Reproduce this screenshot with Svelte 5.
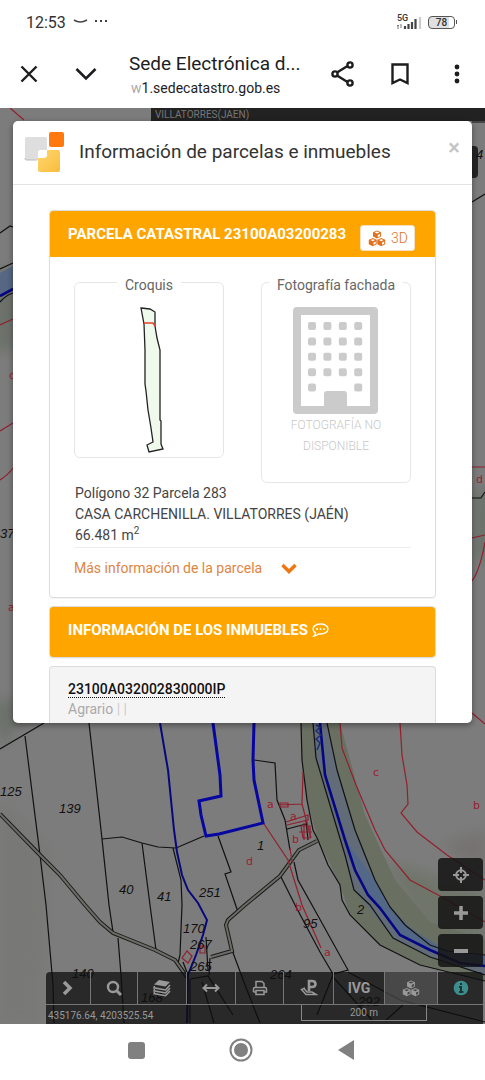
<script lang="ts">
  const windows = [0, 1, 2, 3].flatMap((row) => [0, 1, 2, 3].map((col) => [col, row]));
  windows.push([0, 4], [3, 4]);

  const parcels = [
    "M0 749 44 723M25 736 40 855 46 905 53 985 54 1023",
    "M89 723 96 785 102 839 109 905 113 932M118 938 121 975 124 1023",
    "M102 839 122 837 142 843 158 847 176 848 204 836",
    "M142 843 150 905 156 950M173 848 181 880 182 905 180 955 178 963",
    "M218 836 231 872 225 874 238 912M232 950 245 985 260 1023",
    "M190 979 208 976 233 1015M202 982 214 1023M190 979V1023",
    "M254 760 275 763 277 800 285 820 290 850M287 829 306 824M306 820 308 840",
    "M280 875 295 905 320 952 333 974 348 970 312 905 298 880 294 862",
    "M333 975 317 1015M333 977 372 1020M348 972 400 1000 485 1022M403 1005 385 1021",
    "M301 723 302 760 307 800 313 830 318 840 328 865 340 885 342 900 350 915 380 945 420 965 485 981",
    "M313 723 316 758 330 805 345 855 354 890 370 905 393 938 430 957 485 975",
    "M327 723 337 770 355 830 375 880 390 907 405 925 430 945 447 951 485 955",
    "M206 937 208 970M210 958 209 975M183 962 188 975",
    "M0 233 10 226 13 227M0 269 13 263M0 302Q6 295 13 293",
    "M472 202 485 194M472 498H481L485 492M472 122H485",
  ];
  const roads = [
    "M0 814 40 855 60 875 85 905 100 922 113 933 155 950 175 960 187 977",
    "M317 841 299 850 280 876 245 905 228 920 226 925 232 951 211 957",
  ];
  const subparcels = [
    "M340 723 342 748 356 785 375 830 385 850 410 880 440 896 485 922",
    "M400 723 402 755 407 785 408 804 401 813 417 832 447 855 485 880",
    "M264 824 288 860 302 905 321 948M303 772 302 804 279 805M302 804 311 838",
    "M280 803H288V807H280ZM286 822 308 815V820L287 825M301 826H310V838H303ZM304 823V840M299 832H312M290 848 292 862",
    "M182 958 187 951 192 956 188 963ZM200 946H205V953H200Z",
    "M0 325 13 319M0 431 13 423M0 480Q8 475 13 468M10 108 24 120",
    "M472 467H485M472 538 485 535M472 581Q480 570 485 542M472 713 485 724",
  ];
  const labels = [
    [0, 796, "125"], [59, 813, "139"], [119, 894, "40"], [157, 901, "41"], [199, 897, "251"],
    [183, 933, "170"], [190, 949, "267"], [190, 971, "265"], [72, 978, "140"], [141, 1002, "168"],
    [270, 979, "264"], [358, 1006, "292"], [257, 850, "1"], [357, 914, "2"], [303, 928, "95"],
    [0, 538, "37"], [476, 159, "4"],
  ];
  const redLabels = [
    [267, 808, "a"], [290, 820, "a"], [292, 843, "b"], [246, 865, "d"], [373, 776, "c"],
    [473, 809, "b"], [295, 911, "b"], [324, 956, "a"], [9, 379, "c"], [8, 611, "a"], [476, 483, "d"],
  ];
</script>

{#snippet cubes()}
  <svg class="cubes" viewBox="0 0 20 18" aria-hidden="true">
    {#each [[5.5, 0.5], [1, 8.5], [10, 8.5]] as [x, y]}
      <g transform="translate({x} {y})">
        <path d="M4.5 0 8.7 1.9V6.5L4.5 8.6.3 6.5V1.9Z" fill="currentColor" />
        <path class="cut" d="M4.5 1.2 7 2.2 4.5 3.3 2 2.2ZM5.3 4.7 7.6 3.6V6L5.3 7.1Z" />
      </g>
    {/each}
  </svg>
{/snippet}

<div class="screen">
  <header>
    <div class="status">
      <span class="time">12:53</span>
      <svg width="36" height="10" viewBox="0 0 36 10" aria-hidden="true">
        <path d="M1 3Q7 7 14 3" fill="none" stroke="#444" stroke-width="1.6" />
        <circle cx="23" cy="4" r="1" /><circle cx="28" cy="4" r="1" /><circle cx="33" cy="4" r="1" />
      </svg>
      <span class="signal">
        <b>5G</b>
        <svg width="27" height="12" viewBox="0 0 27 12" aria-hidden="true">
          <path d="M2 8V12M5 7V11M1 9 2 8 3 9" stroke="#777" fill="none" />
          <path d="M9 9V12M12.5 7V12M16 5V12M19.5 2V12" stroke="#444" stroke-width="2.2" />
          <path d="M24 0V12" stroke="#ccc" stroke-width="2.2" />
        </svg>
      </span>
      <span class="battery"><b>78</b></span>
      <span class="battery-tip"></span>
    </div>
    <div class="browser">
      <button aria-label="Cerrar pestaña">
        <svg width="18" height="18" viewBox="0 0 18 18"><path d="M1.5 1.5 16.5 16.5M16.5 1.5 1.5 16.5" /></svg>
      </button>
      <button class="minimize" aria-label="Minimizar">
        <svg width="22" height="14" viewBox="0 0 22 14"><path d="M1.5 2 11 11.5 20.5 2" stroke-width="2.6" /></svg>
      </button>
      <div class="address">
        <div class="site">Sede Electrónica d...</div>
        <div class="url"><span>w</span>1.sedecatastro.gob.es</div>
      </div>
      <button aria-label="Compartir">
        <svg width="24" height="26" viewBox="0 0 24 26">
          <path d="M6 11.5 16.5 5M6 14.5 16.5 21" />
          <circle cx="4" cy="13" r="2.6" /><circle cx="19" cy="4" r="2.6" /><circle cx="19" cy="22" r="2.6" />
        </svg>
      </button>
      <button class="bookmark" aria-label="Guardar">
        <svg width="18" height="22" viewBox="0 0 18 22"><path d="M1.5 1.5H16.5V20L9 16.5 1.5 20Z" /></svg>
      </button>
      <button aria-label="Más opciones">
        <svg class="solid" width="6" height="20" viewBox="0 0 6 20"><circle cx="3" cy="3" r="2.4" /><circle cx="3" cy="10" r="2.4" /><circle cx="3" cy="17" r="2.4" /></svg>
      </button>
    </div>
  </header>

  <main>
    <svg class="map" viewBox="0 108 485 916" preserveAspectRatio="xMidYMin slice" aria-hidden="true">
      <defs>
        <filter id="soft" x="-30%" y="-30%" width="160%" height="160%"><feGaussianBlur stdDeviation="7" /></filter>
      </defs>
      <rect y="108" width="485" height="916" fill="#7c7c7c" />
      <g filter="url(#soft)">
        <path d="M-10 700H40L0 749ZM-10 270H20V350H-10ZM475 490H495V560H475Z" fill="#6c716a" />
        <path d="M0 800 50 850 40 1023H0Z" fill="#787876" />
        <path d="M380 860 485 890V960L430 940Z" fill="#6f746b" />
        <path d="M485 830V870L440 845Z" fill="#747270" />
      </g>
      <path d="M301 723 302 760 307 800 318 840 340 885 350 915 380 945 420 965 485 981V940L430 922 395 880 365 815 340 723Z" fill="#697062" />
      <path d="M313 723 316 758 330 805 354 890 393 938 430 957 485 975V955L430 945 390 907 375 880 355 830 337 770 327 723Z" fill="#626b78" />
      <path d="M0 273 13 266V289L0 296Z" fill="#566784" />
      <path d="M345 840 375 880 390 907 405 925 447 951 485 955V966L430 950 400 935 368 895Z" fill="#536787" />
      <g fill="none">
        {#each parcels as d}<path {d} stroke="#111" stroke-width="1.2" />{/each}
        {#each roads as d}
          <path {d} stroke="#1c1c1c" stroke-width="4" />
          <path {d} stroke="#6c6c66" stroke-width="2" />
        {/each}
        {#each subparcels as d}<path {d} stroke="#92202e" stroke-width="1.2" />{/each}
        <path d="M160 723 168 770 174 830 177 852 182 875 188 890 198 903 207 920 203 935 196 955 188 975 187 1023" stroke="#08087c" stroke-width="2" />
        <path d="M213 723 220 775 221 796 199 801 201 815 206 836 219 834 263 823 254 780 253 760 254 723" stroke="#0606a0" stroke-width="3" />
        <path d="M320 723 325 775 345 840 355 870 368 895 380 908 400 935 430 950 460 963 485 966M0 296 13 289" stroke="#060684" stroke-width="2.6" />
        <path d="M316 725 320 727 316 731 321 735 316 739 320 743 317 750" stroke="#1c2f70" stroke-width="1.5" />
      </g>
      <rect x="440" y="146" width="38" height="32" rx="4" fill="#252525" />
      {#each labels as [x, y, text]}<text {x} {y}>{text}</text>{/each}
      {#each redLabels as [x, y, text]}<text class="red" {x} {y}>{text}</text>{/each}
    </svg>

    <div class="place">VILLATORRES(JAEN)</div>

    <section class="modal">
      <div class="modal-header">
        <svg width="42" height="42" viewBox="0 0 42 42" aria-hidden="true">
          <defs>
            <linearGradient id="yellow" x2="1" y2="1"><stop stop-color="#ffd770" /><stop offset="1" stop-color="#f8bd3c" /></linearGradient>
          </defs>
          <rect x="1" y="6" width="22" height="23" rx="2" fill="#dedede" />
          <path d="M1 27V28Q1 29 3 29H13" stroke="#bbb" fill="none" />
          <rect x="25" y="1" width="15" height="15" rx="2" fill="#ff790f" />
          <rect x="14" y="19" width="22" height="22" rx="2" fill="url(#yellow)" />
          <path d="M14 27V21Q14 19 16 19H23V25Q22 27 20 27Z" fill="#fff" />
        </svg>
        <h1>Información de parcelas e inmuebles</h1>
        <button class="close" aria-label="Cerrar">×</button>
      </div>

      <div class="modal-body">
        <article class="card">
          <h2>
            PARCELA CATASTRAL 23100A03200283
            <button class="view3d">{@render cubes()}3D</button>
          </h2>
          <div class="card-body">
            <div class="pictures">
              <fieldset>
                <legend>Croquis</legend>
                <svg width="148" height="163" viewBox="1 0 148 163" role="img" aria-label="Croquis de la parcela">
                  <path d="M67 14 76 15 81 18V32L83 44 86 56V126L87 127V150L89 155 75 158 73 151 79 148 77 134 74 116 72 97 71 90V56L70 30Z" fill="#eff9ec" stroke="#222" stroke-width="1.3" />
                  <path d="M70 29H79L81 32" fill="none" stroke="#e8402a" stroke-width="1.5" />
                </svg>
              </fieldset>
              <fieldset class="facade">
                <legend>Fotografía fachada</legend>
                <svg width="86" height="108" viewBox="0 0 86 108" aria-hidden="true">
                  <path fill-rule="evenodd" d="M4 0H81Q85 0 85 4V103Q85 107 81 107H4Q0 107 0 103V4Q0 0 4 0ZM8 8V99H31V87Q31 84 34 84H51Q54 84 54 87V99H77V8Z" fill="#cbcbcb" />
                  {#each windows as [col, row]}
                    <rect x={15 + col * 15.4} y={15 + row * 15.4} width="8" height="8" rx="2" fill="#cbcbcb" />
                  {/each}
                </svg>
                <p>FOTOGRAFÍA NO DISPONIBLE</p>
              </fieldset>
            </div>
            <div class="location">
              <div>Polígono 32 Parcela 283</div>
              <div>CASA CARCHENILLA. VILLATORRES (JAÉN)</div>
              <div>66.481 m<sup>2</sup></div>
            </div>
            <button class="more">
              Más información de la parcela
              <svg width="16" height="11" viewBox="0 0 16 11" aria-hidden="true"><path d="M1.5 2 8 8.5 14.5 2" fill="none" stroke="#ee7712" stroke-width="3.5" /></svg>
            </button>
          </div>
        </article>

        <article class="card">
          <h2 class="estates">
            INFORMACIÓN DE LOS INMUEBLES
            <svg width="17" height="14" viewBox="0 0 17 14" aria-hidden="true">
              <path d="M8.5 1C4.5 1 1 3 1 6 1 7.7 2 9 3.6 9.9 3.5 11 3 12 2 13 4 12.7 5.5 12 6.5 10.9 12 11.5 16 9.4 16 6 16 3 12.5 1 8.5 1Z" fill="none" stroke="#fff" stroke-width="1.3" />
              <g fill="#fff"><circle cx="5" cy="6" r="1" /><circle cx="8.5" cy="6" r="1" /><circle cx="12" cy="6" r="1" /></g>
            </svg>
          </h2>
        </article>

        <article class="card estate">
          <a href="#inmueble">23100A032002830000IP</a>
          <div>Agrario <i>|</i> <i>|</i></div>
        </article>
      </div>
    </section>

    <div class="zoom">
      <button aria-label="Localizar">
        <svg width="16" height="16" viewBox="0 0 16 16"><circle cx="8" cy="8" r="4.8" /><path d="M8 0V6M8 10V16M0 8H6M10 8H16" /></svg>
      </button>
      <button aria-label="Acercar">
        <svg width="16" height="16" viewBox="0 0 16 16"><path d="M8 1V15M1 8H15" stroke-width="3.5" /></svg>
      </button>
      <button aria-label="Alejar">
        <svg width="16" height="16" viewBox="0 0 16 16"><path d="M1 8H15" stroke-width="4" /></svg>
      </button>
    </div>

    <div class="tools">
      <nav>
        <button aria-label="Desplegar"><svg width="16" height="18" viewBox="0 0 16 18"><path d="M4 3 10 9 4 15" stroke-width="3.5" /></svg></button>
        <button aria-label="Buscar"><svg width="18" height="18" viewBox="0 0 18 18"><circle cx="8" cy="8" r="5" stroke-width="2.4" /><path d="M12 12 16 16" stroke-width="3" /></svg></button>
        <button aria-label="Capas">
          <svg width="18" height="18" viewBox="0 0 18 18"><path d="M6 1 17 3 12.5 7.5 1 5.5Z" fill="currentColor" stroke="none" /><path d="M1.5 7 1 8.8 12.5 11 17 6M1.5 10 1 11.8 12.5 14 17 9M1.5 13 1 14.6 12.5 16.8 17 12" stroke-width="1.5" /></svg>
        </button>
        <button aria-label="Medir"><svg width="18" height="10" viewBox="0 0 18 10"><path d="M2 5H16M5 1.5 1.5 5 5 8.5M13 1.5 16.5 5 13 8.5" /></svg></button>
        <button aria-label="Imprimir"><svg width="16" height="16" viewBox="0 0 16 16"><path d="M4 8V1.5H10L12 3.5V8M1.5 12V9Q1.5 7.5 3 7.5H13Q14.5 7.5 14.5 9V12H12M1.5 12H4M4 10.5H12V14.5H4Z" stroke-width="1.5" /></svg></button>
        <button aria-label="Ponencia">
          <svg width="18" height="18" viewBox="0 0 18 18"><path d="M9 12V2H12Q15.5 2 15.5 5T12 8H9" stroke-width="2.6" /><path d="M5 9 1.5 10.5 6 15.5H16L12 13H7L4 9.5" stroke-width="1.5" /></svg>
        </button>
        <button>IVG</button>
        <button class="active" aria-label="Vista 3D">{@render cubes()}</button>
        <button aria-label="Información">
          <svg width="16" height="16" viewBox="0 0 16 16"><circle cx="8" cy="8" r="7.3" fill="#3d8d8d" stroke="none" /><path d="M8 3V5M6 7H8V12M6 12H10.5" stroke="#1f3333" /></svg>
        </button>
      </nav>
      <footer>
        <span>435176.64, 4203525.54</span>
        <span class="scale">200 m</span>
      </footer>
    </div>
  </main>

  <div class="system">
    <button aria-label="Recientes"><svg width="18" height="18" viewBox="0 0 18 18"><rect x="1" y="1" width="17" height="17" rx="3" /></svg></button>
    <button aria-label="Inicio"><svg width="24" height="24" viewBox="0 0 24 24"><circle cx="12" cy="12" r="10.5" fill="none" stroke="#808080" stroke-width="2" /><circle cx="12" cy="12" r="7" /></svg></button>
    <button aria-label="Atrás"><svg width="18" height="20" viewBox="0 0 18 20"><path d="M17 0V20L1 10Z" /></svg></button>
  </div>
</div>

<style>
  :global(body) {
    margin: 0;
    font-family: Roboto, "Liberation Sans", sans-serif;
    font-weight: 400;
    background: #fff;
  }

  button {
    margin: 0;
    padding: 0;
    border: 0;
    background: none;
    font: inherit;
    color: inherit;
    cursor: pointer;
  }

  svg {
    display: block;
    flex: none;
  }

  .screen {
    display: flex;
    flex-direction: column;
    min-height: 100vh;
  }

  .status {
    display: flex;
    align-items: center;
    height: 44px;
    padding: 0 28px 0 26px;
    color: #333;
  }

  .time {
    margin-right: 7px;
    font-size: 16px;
  }

  .signal {
    margin-left: auto;
  }

  .signal b {
    display: block;
    margin-left: 1px;
    font-size: 9px;
    line-height: 6px;
    font-weight: 500;
  }

  .signal svg {
    margin-top: -4px;
  }

  .battery {
    display: flex;
    align-items: center;
    justify-content: center;
    width: 25px;
    height: 11px;
    margin-left: 5px;
    border: 1px solid #555;
    border-radius: 4px;
    background: linear-gradient(to right, #e0e0e0 78%, #fff 78%);
    font-size: 10px;
  }

  .battery b {
    font-weight: 500;
  }

  .battery-tip {
    width: 1px;
    height: 4px;
    margin-left: 1px;
    background: #555;
  }

  .browser {
    display: flex;
    align-items: center;
    height: 64px;
    padding: 0 25px 4px 20px;
    box-sizing: border-box;
    color: #1d1d1f;
  }

  .browser svg {
    fill: none;
    stroke: currentColor;
    stroke-width: 2.4;
  }

  .browser .solid {
    fill: currentColor;
    stroke: none;
  }

  .minimize {
    margin-left: 37px;
  }

  .address {
    flex: 1;
    margin: 4px 0 0 32px;
  }

  .site {
    font-size: 19px;
    line-height: 24px;
  }

  .url {
    padding-left: 2px;
    font-size: 14px;
    line-height: 24px;
  }

  .url span {
    color: #aaa;
  }

  .bookmark {
    margin: 0 45px 0 36px;
  }

  main {
    position: relative;
    display: flex;
    flex: 1;
    flex-direction: column;
    background: #7c7c7c;
    overflow: hidden;
  }

  .map {
    position: absolute;
    inset: 0;
    width: 100%;
    height: 100%;
  }

  .map text {
    fill: #101010;
    font: italic 400 13px "Liberation Sans", sans-serif;
  }

  .map .red {
    fill: #9c1c30;
    font: 400 11px "DejaVu Sans", sans-serif;
  }

  .place {
    position: relative;
    height: 13px;
    margin-left: 151px;
    padding-left: 4px;
    background: #222;
    color: #777;
    font-size: 10px;
    line-height: 13px;
  }

  .modal {
    position: relative;
    margin: 0 13px;
    border-radius: 5px;
    background: #fff;
    box-shadow: 0 2px 6px rgba(0, 0, 0, 0.4);
    overflow: hidden;
  }

  .modal-header {
    display: flex;
    align-items: center;
    height: 62px;
    padding: 0 12px 1px 11px;
    border-bottom: 1px solid #e3e3e3;
  }

  h1 {
    flex: 1;
    margin: 0 0 0 13px;
    color: #333;
    font-size: 19px;
    line-height: 28px;
    font-weight: 400;
    white-space: nowrap;
  }

  .close {
    margin-bottom: 9px;
    color: #c4c4c4;
    font-size: 22px;
    line-height: 24px;
    font-weight: 500;
  }

  .modal-body {
    display: flex;
    flex-direction: column;
    gap: 8px;
    padding: 25px 36px 0;
  }

  .card {
    border: 1px solid #dcdcdc;
    border-radius: 4px;
    box-shadow: 0 1px 1px rgba(0, 0, 0, 0.05);
    overflow: hidden;
  }

  h2 {
    display: flex;
    align-items: center;
    height: 46px;
    margin: 0;
    padding: 0 18px;
    background: #ffa500;
    color: #fff;
    font-size: 15px;
    font-weight: 700;
    white-space: nowrap;
  }

  .estates {
    gap: 4px;
    height: 50px;
    padding-bottom: 4px;
    box-sizing: border-box;
  }

  .view3d {
    display: flex;
    align-items: center;
    gap: 4px;
    height: 26px;
    margin: 8px 0 0 14px;
    padding: 0 6px;
    border: 1px solid #f3dfc0;
    border-radius: 3px;
    box-sizing: border-box;
    background: #fff;
    color: #e2701c;
    font-size: 14px;
    font-weight: 300;
  }

  .cubes {
    width: 20px;
    height: 17px;
  }

  .cut {
    fill: #fff;
  }

  .card-body {
    padding: 13px 24px 19px;
  }

  .pictures {
    display: flex;
    align-items: flex-start;
    justify-content: space-between;
  }

  fieldset {
    flex: 0 1 150px;
    min-width: 0;
    margin: 0;
    padding: 0;
    border: 1px solid #e6e6e6;
    border-radius: 6px;
    box-sizing: border-box;
  }

  fieldset svg {
    margin: 0 auto;
    max-width: 100%;
  }

  legend {
    margin: 0 auto;
    padding: 6px 8px 0;
    color: #666;
    font-size: 14px;
    line-height: 18px;
    white-space: nowrap;
  }

  .facade svg {
    margin-top: 13px;
  }

  .facade p {
    margin: 0 20px;
    padding-bottom: 25px;
    color: #c8c8c8;
    font-size: 12px;
    font-weight: 300;
    line-height: 21px;
    text-align: center;
  }

  .location {
    padding: 0 0 1px 1px;
    border-bottom: 1px solid #eee;
    color: #444;
    font-size: 14px;
    line-height: 21px;
  }

  sup {
    font-size: 10px;
    line-height: 0;
  }

  .more {
    display: flex;
    align-items: center;
    gap: 19px;
    margin-top: 10px;
    color: #e08540;
    font-size: 14px;
    line-height: 20px;
  }

  .estate {
    padding: 12px 18px 4px;
    border-bottom: 0;
    border-radius: 4px 4px 0 0;
    background: #f4f4f4;
    color: #aaa;
    font-size: 14px;
    line-height: 20px;
  }

  .estate a {
    border-bottom: 1px dotted #111;
    color: #111;
    font-weight: 500;
    text-decoration: none;
  }

  .estate i {
    color: #ccc;
    font-style: normal;
  }

  .zoom {
    position: relative;
    display: flex;
    flex-direction: column;
    gap: 5px;
    width: 45px;
    margin: auto 2px 5px auto;
  }

  .zoom button,
  nav button {
    display: flex;
    align-items: center;
    justify-content: center;
    height: 33px;
    color: #999;
  }

  .zoom button {
    border-radius: 4px;
    background: rgba(20, 20, 20, 0.86);
  }

  .zoom svg,
  nav svg:not(.cubes) {
    fill: none;
    stroke: currentColor;
    stroke-width: 2;
  }

  .tools {
    position: relative;
    margin: 0 2px 0 46px;
    border-radius: 4px 4px 0 0;
    background: rgba(14, 14, 14, 0.76);
    color: #999;
    overflow: hidden;
  }

  nav {
    display: grid;
    grid-template-columns: 44fr 47fr 49fr 49fr 48fr 50fr 51fr 53fr 46fr;
    border-bottom: 1px solid #777;
  }

  nav button {
    height: 32px;
    font-size: 14px;
    font-weight: 700;
  }

  nav button + button {
    border-left: 1px solid #777;
  }

  nav .active {
    background: rgba(120, 120, 120, 0.4);
  }

  nav .cut {
    fill: #444;
  }

  footer {
    display: flex;
    justify-content: space-between;
    height: 18px;
    padding: 0 56px 1px 2px;
    font-size: 10px;
    line-height: 22px;
  }

  .scale {
    width: 124px;
    height: 15px;
    border: 1px solid #888;
    border-top: 0;
    line-height: 15px;
    text-align: center;
  }

  .system {
    display: flex;
    align-items: center;
    justify-content: center;
    gap: 84px;
    height: 56px;
    padding: 0 4px 4px 0;
    box-sizing: border-box;
  }

  .system svg {
    fill: #808080;
  }
</style>
